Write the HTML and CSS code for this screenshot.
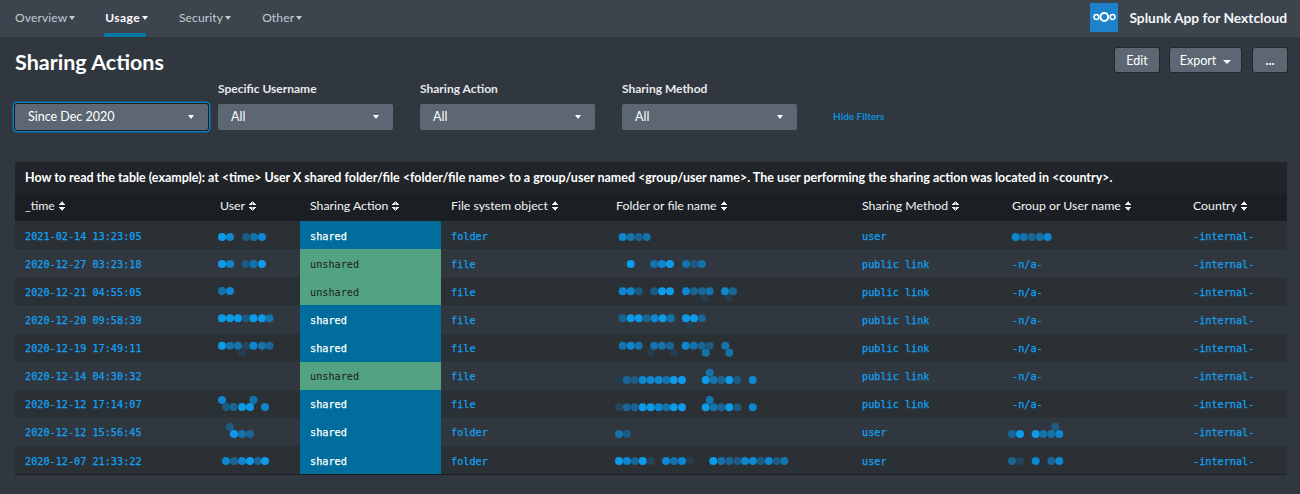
FILE: index.html
```html
<!DOCTYPE html>
<html lang="en">
<head>
<meta charset="utf-8">
<title>Sharing Actions</title>
<link rel="stylesheet" href="styles.css">
</head>
<body>
<nav class="nav">
  <ul class="menu">
    <li class="menu-item">Overview<i class="caret"></i></li>
    <li class="menu-item active">Usage<i class="caret"></i></li>
    <li class="menu-item">Security<i class="caret"></i></li>
    <li class="menu-item">Other<i class="caret"></i></li>
  </ul>
  <div class="brand">
    <svg class="logo" viewBox="0 0 28 29" width="28" height="29">
      <rect width="28" height="29" fill="#1c82c9"/>
      <g fill="none" stroke="#fff">
        <circle cx="14.3" cy="14" r="3.9" stroke-width="2"/>
        <circle cx="6.4" cy="14" r="2.4" stroke-width="1.5"/>
        <circle cx="22.6" cy="14" r="2.4" stroke-width="1.5"/>
      </g>
    </svg>
    <span class="brand-name">Splunk App for Nextcloud</span>
  </div>
</nav>
<main>
  <header class="head">
    <h1 class="title">Sharing Actions</h1>
    <div class="actions">
      <button class="btn">Edit</button>
      <button class="btn btn-export">Export<i class="caret caret-lg"></i></button>
      <button class="btn btn-more">...</button>
    </div>
  </header>
  <section class="filters">
    <div class="filter filter-time">
      <div class="label"></div>
      <div class="select select-focus"><span>Since Dec 2020</span><i class="caret caret-lg"></i></div>
    </div>
    <div class="filter">
      <div class="label">Specific Username</div>
      <div class="select"><span>All</span><i class="caret caret-lg"></i></div>
    </div>
    <div class="filter">
      <div class="label">Sharing Action</div>
      <div class="select"><span>All</span><i class="caret caret-lg"></i></div>
    </div>
    <div class="filter">
      <div class="label">Sharing Method</div>
      <div class="select"><span>All</span><i class="caret caret-lg"></i></div>
    </div>
    <a class="hide-filters">Hide Filters</a>
  </section>
  <section class="panel">
    <h2 class="panel-title">How to read the table (example): at &lt;time&gt; User X shared folder/file &lt;folder/file name&gt; to a group/user named &lt;group/user name&gt;. The user performing the sharing action was located in &lt;country&gt;.</h2>
    <table class="grid">
      <colgroup>
        <col class="c-time"><col class="c-user"><col class="c-action"><col class="c-obj"><col class="c-name"><col class="c-method"><col class="c-group"><col class="c-country">
      </colgroup>
      <thead>
        <tr>
          <th>_time<i class="sort"></i></th>
          <th>User<i class="sort"></i></th>
          <th>Sharing Action<i class="sort"></i></th>
          <th>File system object<i class="sort"></i></th>
          <th>Folder or file name<i class="sort"></i></th>
          <th>Sharing Method<i class="sort"></i></th>
          <th>Group or User name<i class="sort"></i></th>
          <th>Country<i class="sort"></i></th>
        </tr>
      </thead>
      <tbody>
        <tr>
          <td>2021-02-14 13:23:05</td>
          <td class="blur"><svg viewBox="210 221 90 28" width="90" height="28"><circle class="a" cx="222" cy="237"/><circle class="b" cx="230" cy="237"/><circle class="e" cx="246" cy="237"/><circle class="c" cx="254" cy="237"/><circle class="b" cx="262" cy="237"/></svg></td>
          <td class="st-shared">shared</td>
          <td>folder</td>
          <td class="blur"><svg viewBox="606 221 246 28" width="246" height="28"><circle class="b" cx="622.7" cy="237"/><circle class="c" cx="630.7" cy="237"/><circle class="d" cx="638.7" cy="237"/><circle class="c" cx="646.7" cy="237"/></svg></td>
          <td>user</td>
          <td class="blur"><svg viewBox="1002 221 181 28" width="181" height="28"><circle class="b" cx="1015.7" cy="237"/><circle class="c" cx="1023.7" cy="237"/><circle class="d" cx="1031.7" cy="237"/><circle class="c" cx="1039.7" cy="237"/><circle class="b" cx="1047.7" cy="237"/></svg></td>
          <td>-internal-</td>
        </tr>
        <tr>
          <td>2020-12-27 03:23:18</td>
          <td class="blur"><svg viewBox="210 249 90 28" width="90" height="28"><circle class="a" cx="222" cy="264"/><circle class="b" cx="230" cy="264"/><circle class="e" cx="245.5" cy="264"/><circle class="c" cx="253.5" cy="264"/><circle class="a" cx="262" cy="264"/></svg></td>
          <td class="st-unshared">unshared</td>
          <td>file</td>
          <td class="blur"><svg viewBox="606 249 246 28" width="246" height="28"><circle class="a" cx="630.7" cy="264"/><circle class="c" cx="654" cy="264"/><circle class="b" cx="662" cy="264"/><circle class="a" cx="670" cy="264"/><circle class="c" cx="686" cy="264"/><circle class="e" cx="694" cy="264"/><circle class="c" cx="701.7" cy="264"/></svg></td>
          <td>public link</td>
          <td>-n/a-</td>
          <td>-internal-</td>
        </tr>
        <tr>
          <td>2020-12-21 04:55:05</td>
          <td class="blur"><svg viewBox="210 277 90 28" width="90" height="28"><circle class="c" cx="222" cy="291"/><circle class="b" cx="230" cy="291"/></svg></td>
          <td class="st-unshared">unshared</td>
          <td>file</td>
          <td class="blur"><svg viewBox="606 277 246 28" width="246" height="28"><circle class="g" cx="705" cy="298"/><circle class="g" cx="729" cy="298"/><circle class="b" cx="622.7" cy="291.3"/><circle class="b" cx="630.7" cy="291.3"/><circle class="e" cx="638.7" cy="291.3"/><circle class="e" cx="654" cy="291.3"/><circle class="a" cx="662" cy="291.3"/><circle class="a" cx="670" cy="291.3"/><circle class="b" cx="686" cy="291.3"/><circle class="d" cx="694" cy="291.3"/><circle class="d" cx="702" cy="291.3"/><circle class="c" cx="709.7" cy="291.3"/><circle class="b" cx="725" cy="291.3"/><circle class="d" cx="733" cy="291.3"/></svg></td>
          <td>public link</td>
          <td>-n/a-</td>
          <td>-internal-</td>
        </tr>
        <tr>
          <td>2020-12-20 09:58:39</td>
          <td class="blur"><svg viewBox="210 305 90 28" width="90" height="28"><circle class="a" cx="222" cy="318.3"/><circle class="a" cx="230" cy="318.3"/><circle class="a" cx="238" cy="318.3"/><circle class="e" cx="246" cy="318.3"/><circle class="a" cx="253.5" cy="318.3"/><circle class="a" cx="262" cy="318.3"/><circle class="c" cx="269.5" cy="318.3"/></svg></td>
          <td class="st-shared">shared</td>
          <td>file</td>
          <td class="blur"><svg viewBox="606 305 246 28" width="246" height="28"><circle class="g" cx="690" cy="326"/><circle class="d" cx="622.7" cy="318.3"/><circle class="a" cx="630.7" cy="318.3"/><circle class="a" cx="638.7" cy="318.3"/><circle class="d" cx="646.7" cy="318.3"/><circle class="b" cx="654.7" cy="318.3"/><circle class="a" cx="662.7" cy="318.3"/><circle class="c" cx="670.7" cy="318.3"/><circle class="a" cx="686" cy="318.3"/><circle class="a" cx="694" cy="318.3"/><circle class="d" cx="702" cy="318.3"/></svg></td>
          <td>public link</td>
          <td>-n/a-</td>
          <td>-internal-</td>
        </tr>
        <tr>
          <td>2020-12-19 17:49:11</td>
          <td class="blur"><svg viewBox="210 334 90 28" width="90" height="28"><circle class="g" cx="242" cy="353"/><circle class="a" cx="222" cy="345.7"/><circle class="c" cx="230" cy="345.7"/><circle class="c" cx="238" cy="345.7"/><circle class="f" cx="246" cy="345.7"/><circle class="b" cx="253.5" cy="345.7"/><circle class="c" cx="262" cy="345.7"/><circle class="d" cx="269.5" cy="345.7"/></svg></td>
          <td class="st-shared">shared</td>
          <td>file</td>
          <td class="blur"><svg viewBox="606 334 246 28" width="246" height="28"><circle class="g" cx="650.7" cy="352.7"/><circle class="g" cx="674" cy="352.7"/><circle class="c" cx="622.7" cy="345.7"/><circle class="b" cx="630.7" cy="345.7"/><circle class="c" cx="638.7" cy="345.7"/><circle class="c" cx="654" cy="345.7"/><circle class="c" cx="662" cy="345.7"/><circle class="d" cx="670" cy="345.7"/><circle class="b" cx="685.7" cy="345.7"/><circle class="c" cx="693.7" cy="345.7"/><circle class="d" cx="701.7" cy="345.7"/><circle class="e" cx="709.7" cy="345.7"/><circle class="c" cx="705.7" cy="352.7"/><circle class="c" cx="725.3" cy="345.7"/><circle class="c" cx="729.3" cy="352.7"/></svg></td>
          <td>public link</td>
          <td>-n/a-</td>
          <td>-internal-</td>
        </tr>
        <tr>
          <td>2020-12-14 04:30:32</td>
          <td></td>
          <td class="st-unshared">unshared</td>
          <td>file</td>
          <td class="blur"><svg viewBox="606 362 246 28" width="246" height="28"><circle class="c" cx="709.7" cy="372.7"/><circle class="g" cx="619" cy="380"/><circle class="d" cx="626.7" cy="380"/><circle class="e" cx="634.7" cy="380"/><circle class="b" cx="642.7" cy="380"/><circle class="b" cx="650.7" cy="380"/><circle class="b" cx="658.7" cy="380"/><circle class="c" cx="666.3" cy="380"/><circle class="a" cx="673.7" cy="380"/><circle class="a" cx="682" cy="380"/><circle class="a" cx="705.7" cy="380"/><circle class="c" cx="713.7" cy="380"/><circle class="d" cx="721.3" cy="380"/><circle class="a" cx="729.3" cy="380"/><circle class="e" cx="737.3" cy="380"/><circle class="b" cx="752.7" cy="380"/></svg></td>
          <td>public link</td>
          <td>-n/a-</td>
          <td>-internal-</td>
        </tr>
        <tr>
          <td>2020-12-12 17:14:07</td>
          <td class="blur"><svg viewBox="210 390 90 28" width="90" height="28"><circle class="b" cx="222" cy="400"/><circle class="c" cx="253.5" cy="400"/><circle class="e" cx="226" cy="407"/><circle class="d" cx="233.5" cy="407"/><circle class="a" cx="242" cy="407"/><circle class="a" cx="250" cy="407"/><circle class="b" cx="265" cy="407"/></svg></td>
          <td class="st-shared">shared</td>
          <td>file</td>
          <td class="blur"><svg viewBox="606 390 246 28" width="246" height="28"><circle class="c" cx="709.7" cy="400"/><circle class="f" cx="619" cy="407.3"/><circle class="d" cx="626.7" cy="407.3"/><circle class="d" cx="634.7" cy="407.3"/><circle class="a" cx="642.7" cy="407.3"/><circle class="a" cx="650.7" cy="407.3"/><circle class="b" cx="658.7" cy="407.3"/><circle class="c" cx="666.3" cy="407.3"/><circle class="a" cx="673.7" cy="407.3"/><circle class="a" cx="682" cy="407.3"/><circle class="a" cx="705.7" cy="407.3"/><circle class="c" cx="713.7" cy="407.3"/><circle class="d" cx="721.3" cy="407.3"/><circle class="a" cx="729.3" cy="407.3"/><circle class="e" cx="737.3" cy="407.3"/><circle class="b" cx="752.7" cy="407.3"/></svg></td>
          <td>public link</td>
          <td>-n/a-</td>
          <td>-internal-</td>
        </tr>
        <tr>
          <td>2020-12-12 15:56:45</td>
          <td class="blur"><svg viewBox="210 418 90 28" width="90" height="28"><circle class="e" cx="230" cy="427"/><circle class="a" cx="234" cy="434"/><circle class="c" cx="242" cy="434"/><circle class="d" cx="250" cy="434"/></svg></td>
          <td class="st-shared">shared</td>
          <td>folder</td>
          <td class="blur"><svg viewBox="606 418 246 28" width="246" height="28"><circle class="c" cx="619" cy="434"/><circle class="e" cx="627" cy="434"/></svg></td>
          <td>user</td>
          <td class="blur"><svg viewBox="1002 418 181 28" width="181" height="28"><circle class="e" cx="1055.3" cy="426.7"/><circle class="d" cx="1012" cy="434"/><circle class="a" cx="1020" cy="434"/><circle class="a" cx="1035.7" cy="434"/><circle class="c" cx="1043.3" cy="434"/><circle class="c" cx="1051.3" cy="434"/><circle class="b" cx="1059.3" cy="434"/></svg></td>
          <td>-internal-</td>
        </tr>
        <tr>
          <td>2020-12-07 21:33:22</td>
          <td class="blur"><svg viewBox="210 446 90 28" width="90" height="28"><circle class="b" cx="226" cy="461"/><circle class="d" cx="234" cy="461"/><circle class="b" cx="242" cy="461"/><circle class="a" cx="250" cy="461"/><circle class="d" cx="258" cy="461"/><circle class="a" cx="265" cy="461"/></svg></td>
          <td class="st-shared">shared</td>
          <td>folder</td>
          <td class="blur"><svg viewBox="606 446 246 28" width="246" height="28"><circle class="a" cx="619" cy="461"/><circle class="b" cx="627" cy="461"/><circle class="d" cx="635" cy="461"/><circle class="a" cx="642.7" cy="461"/><circle class="f" cx="650.7" cy="461"/><circle class="b" cx="666" cy="461"/><circle class="c" cx="674" cy="461"/><circle class="b" cx="682" cy="461"/><circle class="g" cx="690" cy="461"/><circle class="a" cx="713.3" cy="461"/><circle class="c" cx="721.3" cy="461"/><circle class="d" cx="729.3" cy="461"/><circle class="e" cx="737.3" cy="461"/><circle class="b" cx="745" cy="461"/><circle class="b" cx="753" cy="461"/><circle class="e" cx="760.7" cy="461"/><circle class="b" cx="768.7" cy="461"/><circle class="e" cx="776.7" cy="461"/><circle class="c" cx="784.3" cy="461"/></svg></td>
          <td>user</td>
          <td class="blur"><svg viewBox="1002 446 181 28" width="181" height="28"><circle class="d" cx="1012" cy="461"/><circle class="f" cx="1020" cy="461"/><circle class="b" cx="1035.7" cy="461"/><circle class="d" cx="1051.3" cy="461"/><circle class="b" cx="1059.3" cy="461"/></svg></td>
          <td>-internal-</td>
        </tr>
      </tbody>
    </table>
  </section>
</main>
</body>
</html>
```
FILE: styles.css
```css
* { box-sizing: border-box; }
html, body { height: 100%; }
body {
  margin: 0;
  background: #31373e;
  color: #fff;
  font-family: "Lato", "Open Sans", sans-serif;
  overflow: hidden;
}

/* top navigation */
.nav {
  height: 37px;
  background: #3c444d;
  display: flex;
  justify-content: space-between;
  padding: 0 13px 0 15px;
}
.menu {
  list-style: none;
  margin: 0;
  padding: 0;
  display: flex;
  gap: 31px;
}
.menu-item {
  height: 37px;
  line-height: 35px;
  font-size: 12px;
  letter-spacing: .15px;
  color: #c3cbd4;
  position: relative;
}
.menu-item:first-child { margin-right: -1px; }
.menu-item.active { color: #fff; font-weight: 700; letter-spacing: .4px; }
.menu-item.active::after {
  content: "";
  position: absolute;
  left: -1px;
  right: 2px;
  bottom: 0;
  height: 4px;
  background: #0877a6;
}
.caret {
  display: inline-block;
  width: 0;
  height: 0;
  margin-left: 2px;
  vertical-align: 2px;
  border-left: 3.5px solid transparent;
  border-right: 3.5px solid transparent;
  border-top: 4px solid currentColor;
}
.brand {
  display: flex;
  align-items: center;
  gap: 11px;
  padding-bottom: 2px;
}
.logo { display: block; }
.brand-name { font-size: 13.8px; font-weight: 700; color: #f4f6f8; }

/* dashboard header */
.head {
  height: 43px;
  padding: 10px 12px 0 15px;
  display: flex;
  justify-content: space-between;
  align-items: flex-start;
}
.title {
  margin: 3px 0 0;
  font-size: 21.5px;
  line-height: 24px;
  font-weight: 700;
}
.actions { display: flex; gap: 9px; }
.btn {
  height: 26px;
  width: 46px;
  padding: 0;
  background: #5c6773;
  color: #fff;
  border: 1px solid #23282d;
  border-radius: 3px;
  font: 400 12.5px "Lato", sans-serif;
}
.btn-export { width: 73px; }
.btn-export .caret { margin-left: 7px; vertical-align: 1px; border-left-width: 4px; border-right-width: 4px; }
.btn-more { width: 36px; margin-left: 1px; font-weight: 700; }

/* filters */
.filters {
  display: flex;
  align-items: flex-end;
  padding-left: 15px;
}
.filter { width: 175px; margin-right: 27px; }
.filter-time { width: 193px; margin-right: 10px; }
.label {
  height: 24px;
  font-size: 12px;
  line-height: 18px;
  font-weight: 700;
  color: #e6e9ed;
}
.select {
  height: 26px;
  background: #5c6773;
  border-radius: 2px;
  padding: 0 14px 1px 13px;
  display: flex;
  justify-content: space-between;
  align-items: center;
  font-size: 12.5px;
  color: #fff;
}
.select-focus {
  box-shadow: 0 0 0 1px #1b2025, 0 0 0 2.5px #0b7bbd;
}
.hide-filters {
  margin-left: 9px;
  height: 26px;
  line-height: 24px;
  font-size: 10px;
  font-weight: 700;
  color: #0e8fdc;
}

/* table panel */
.panel { margin: 32px 13px 0 15px; }
.panel-title {
  margin: 0;
  height: 31px;
  line-height: 31px;
  padding-left: 10px;
  background: #212529;
  font-size: 12.47px;
  font-weight: 700;
  white-space: nowrap;
}
.grid {
  width: 1272px;
  table-layout: fixed;
  border-collapse: collapse;
  border-bottom: 1px solid #1b1f23;
}
.c-time { width: 195px; }
.c-user { width: 90px; }
.c-action { width: 141px; }
.c-obj { width: 165px; }
.c-name { width: 246px; }
.c-method { width: 150px; }
.c-group { width: 181px; }
.c-country { width: 104px; }
th {
  height: 28px;
  padding: 0 10px 3px;
  background: #1b1f23;
  text-align: left;
  font-size: 12.3px;
  font-weight: 400;
  color: #f1f3f5;
}
.sort {
  display: inline-block;
  width: 7px;
  height: 10px;
  margin-left: 4px;
  vertical-align: -1px;
  background:
    linear-gradient(to bottom right, transparent 49%, currentColor 51%) 0 0 / 3.5px 4px no-repeat,
    linear-gradient(to bottom left, transparent 49%, currentColor 51%) 3.5px 0 / 3.5px 4px no-repeat,
    linear-gradient(to top right, transparent 49%, currentColor 51%) 0 6px / 3.5px 4px no-repeat,
    linear-gradient(to top left, transparent 49%, currentColor 51%) 3.5px 6px / 3.5px 4px no-repeat;
}
td {
  height: 28px;
  padding: 2px 10px 0;
  font-family: "DejaVu Sans Mono", monospace;
  font-size: 10.2px;
  color: #12a0f0;
  -webkit-text-stroke: .25px;
  white-space: nowrap;
}
tbody tr:nth-child(4) td { height: 29px; padding-top: 1px; }
tbody tr:nth-child(n+5):nth-child(-n+8) td { padding-top: 0; }
tbody tr:nth-child(odd) td { background: #2b3035; }
tbody tr:nth-child(even) td { background: #31373e; }
tbody tr td.st-shared { background: #006d9c; color: #fff; }
tbody tr td.st-unshared { background: #53a383; color: #171d21; -webkit-text-stroke: 0; }
tbody tr td.blur { padding: 0; vertical-align: top; }
td.blur svg { display: block; overflow: visible; }

/* redaction dots */
circle[class] { r: 4px; }
.a { fill: #0c9ae9; }
.b { fill: #0e86d0; }
.c { fill: #1573ac; }
.d { fill: #1a6594; }
.e { fill: #1c5c84; }
.f { fill: #24455c; }
.g { fill: #273d4e; }
```
